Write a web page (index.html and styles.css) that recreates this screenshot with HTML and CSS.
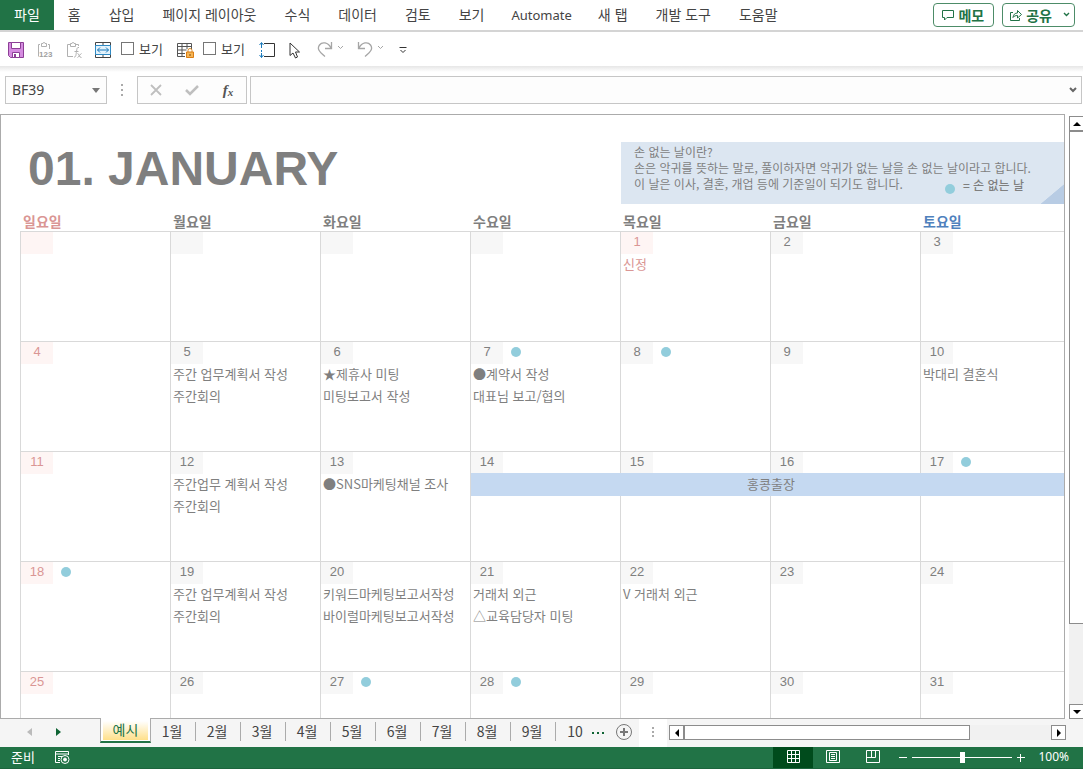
FILE: index.html
```html
<!DOCTYPE html>
<html lang="ko">
<head>
<meta charset="utf-8">
<title>01. JANUARY</title>
<link rel="stylesheet" href="styles.css">
</head>
<body>
<header class="menubar">
  <nav class="menu" aria-label="리본 메뉴">
    <button class="menu-item menu-file">파일</button>
    <button class="menu-item">홈</button>
    <button class="menu-item">삽입</button>
    <button class="menu-item">페이지 레이아웃</button>
    <button class="menu-item">수식</button>
    <button class="menu-item">데이터</button>
    <button class="menu-item">검토</button>
    <button class="menu-item">보기</button>
    <button class="menu-item menu-latin">Automate</button>
    <button class="menu-item">새 탭</button>
    <button class="menu-item">개발 도구</button>
    <button class="menu-item">도움말</button>
  </nav>
  <div class="menu-actions">
    <button class="outline-button">
      <svg width="12" height="12" viewBox="0 0 12 12" fill="none" stroke="currentColor"><path d="M.5 1.500h11v7H5l-2.500 2.500V8.500h-2z"/></svg>
      <span>메모</span>
    </button>
    <button class="outline-button outline-share">
      <svg width="12" height="12" viewBox="0 0 12 12" fill="none" stroke="currentColor"><path d="M3 3.500H.5v8h9V9M3 8.500c.3-3 2-4.500 4.500-4.500V1.500l4 4-4 3.500V6.500C5.500 6.500 4 7 3 8.500z"/></svg>
      <span>공유</span>
      <svg class="share-caret" width="7" height="5" viewBox="0 0 7 5" fill="none" stroke="currentColor" stroke-width="1.400"><path d="M1 1l2.500 2.500L6 1"/></svg>
    </button>
  </div>
</header>

<div class="quickbar">
  <button class="tool" aria-label="저장">
    <svg width="16" height="16" viewBox="0 0 16 16"><path d="M.5.5h15v15h-13l-2-2z" fill="#d58ce0" stroke="#8c3f96"/><path d="M3.500.5h9v6h-9z" fill="#fff" stroke="#8c3f96"/><path d="M4.500 15.500v-5h7v5z" fill="#fff" stroke="#8c3f96"/><path d="M6 12h2v3H6z" fill="#8c3f96"/></svg>
  </button>
  <button class="tool" aria-label="값 붙여넣기">
    <svg width="16" height="16" viewBox="0 0 16 16" fill="none" stroke="#b0b0b0"><path d="M3 2.500H1.500v12M11 2.500h1.500V7M4.500 1.500h1.500c0-1.500 2-1.500 2 0h1.500v3h-5z"/><text class="glyph-123" x="2" y="15">123</text></svg>
  </button>
  <button class="tool" aria-label="수식 붙여넣기">
    <svg width="16" height="16" viewBox="0 0 16 16" fill="none" stroke="#b0b0b0"><path d="M4 2.500H1.500v12H7M10 2.500h2.500V4M4.500 1.500h1.500c0-1.500 2-1.500 2 0h1.500v3h-5z"/><path d="M13 5.500c-2-.5-2 1-2.500 4s-.5 6-2.500 5.500M8.500 9.500h4M11.500 11.500c2 0 1 4 4 4M15.500 11.500c-1 0-3 4-4 4"/></svg>
  </button>
  <button class="tool" aria-label="병합하고 가운데 맞춤">
    <svg width="16" height="16" viewBox="0 0 16 16" fill="none" stroke="#444"><path d="M.5.5h15v15H.5z" fill="#fff"/><path d="M8 .5v3M8 12.500v3"/><path d="M.5 3.500h15v9H.5z" fill="#e4f3fc" stroke="#2f8ac4"/><path d="M2.500 8h11M5 5.500L2.500 8 5 10.500M11 5.500L13.500 8 11 10.500" stroke="#1979ba"/></svg>
  </button>
  <label class="check"><input type="checkbox">보기</label>
  <button class="tool tool-lock" aria-label="시트 보호">
    <svg width="17" height="16" viewBox="0 0 17 16" fill="none" stroke="#555"><path d="M8 14.500H.5v-13h14V7M.5 4.500h14M.5 8h9M.5 11.500H8M5 1.500v13M10 1.500V7"/><path d="M11 10V8.500a2 2 0 0 1 4 0V10" stroke="#db8a22"/><path d="M9.500 10h7v5.500h-7z" fill="#f5b555" stroke="#db7d13"/><path d="M13 12v2" stroke="#7e4c10"/></svg>
  </button>
  <label class="check"><input type="checkbox">보기</label>
  <button class="tool tool-height" aria-label="행 높이">
    <svg width="16" height="16" viewBox="0 0 16 16" fill="none" stroke="#333"><path d="M5 1.500h10.500v13H5"/><path d="M2.500 1v5M2.500 8v2M2.500 11v4.500M.5 3l2-2.500 2 2.500M.5 13l2 2.500 2-2.500" stroke="#1979ba"/></svg>
  </button>
  <button class="tool tool-pointer" aria-label="개체 선택">
    <svg width="12" height="17" viewBox="0 0 12 17" fill="#fff" stroke="#333"><path d="M1 1v12.500l3-2.500 2.500 5 2-1-2-5h4z"/></svg>
  </button>
  <button class="tool tool-arrow" aria-label="다시 실행">
    <svg width="28" height="16" viewBox="0 0 28 16" fill="none" stroke="#a6a6a6"><path d="M14.500 0v6.500H8M14 6C11 0 5-.5 2.500 3S1.500 9 8 14.500" stroke-width="1.300"/><path d="M21 4l2.500 2.500L26 4"/></svg>
  </button>
  <button class="tool tool-arrow" aria-label="실행 취소">
    <svg width="28" height="16" viewBox="0 0 28 16" fill="none" stroke="#a6a6a6"><path d="M1.500 0v6.500H8M2 6c3-6 9-6.500 11.500-3S14.500 9 8 14.500" stroke-width="1.300"/><path d="M21 4l2.500 2.500L26 4"/></svg>
  </button>
  <button class="tool" aria-label="빠른 실행 도구 모음 사용자 지정">
    <svg width="8" height="9" viewBox="0 0 8 9" fill="none" stroke="#333"><path d="M.5 1.500h7M1.500 4L4 6.500 6.500 4"/></svg>
  </button>
</div>

<div class="formulabar">
  <div class="namebox">
    <input class="namebox-input" aria-label="이름 상자" value="BF39">
    <button class="namebox-button" aria-label="이름 목록"><svg width="8" height="5" viewBox="0 0 8 5" fill="#777"><path d="M0 0h8L4 5z"/></svg></button>
  </div>
  <svg class="grip" width="2" height="12" viewBox="0 0 2 12" fill="#aaa"><path d="M0 0h2v2H0zM0 5h2v2H0zM0 10h2v2H0z"/></svg>
  <div class="formula-tools">
    <button class="plain" aria-label="취소"><svg width="12" height="12" viewBox="0 0 12 12" fill="none" stroke="#bfbfbf" stroke-width="1.800"><path d="M1 1l10 10M11 1L1 11"/></svg></button>
    <button class="plain" aria-label="입력"><svg width="14" height="12" viewBox="0 0 14 12" fill="none" stroke="#bfbfbf" stroke-width="2.500"><path d="M1 6l4 4 8-8"/></svg></button>
    <button class="plain fx" aria-label="함수 삽입">f<small>x</small></button>
  </div>
  <div class="formula-field">
    <input class="formula-input" aria-label="수식 입력줄">
    <button class="plain formula-expand" aria-label="확장"><svg width="8" height="6" viewBox="0 0 8 6" fill="none" stroke="#666" stroke-width="2"><path d="M1 1l3 3 3-3"/></svg></button>
  </div>
</div>

<main class="workspace">
  <section class="sheet">
    <div class="sheet-head">
      <h1 class="month">01. JANUARY</h1>
      <div class="note">
        <p>손 없는 날이란?</p>
        <p>손은 악귀를 뜻하는 말로, 풀이하자면 악귀가 없는 날을 손 없는 날이라고 합니다.</p>
        <p class="note-last">이 날은 이사, 결혼, 개업 등에 기준일이 되기도 합니다. <span class="legend"><i class="dot"></i>= 손 없는 날</span></p>
      </div>
    </div>
    <table class="calendar">
      <thead>
        <tr><th class="sun">일요일</th><th>월요일</th><th>화요일</th><th>수요일</th><th>목요일</th><th>금요일</th><th class="sat">토요일</th></tr>
      </thead>
      <tbody>
        <tr>
          <td class="holiday"><div class="day"><b></b></div></td>
          <td><div class="day"><b></b></div></td>
          <td><div class="day"><b></b></div></td>
          <td><div class="day"><b></b></div></td>
          <td class="holiday"><div class="day"><b>1</b></div><p>신정</p></td>
          <td><div class="day"><b>2</b></div></td>
          <td><div class="day"><b>3</b></div></td>
        </tr>
        <tr>
          <td class="holiday"><div class="day"><b>4</b></div></td>
          <td><div class="day"><b>5</b></div><p>주간 업무계획서 작성</p><p>주간회의</p></td>
          <td><div class="day"><b>6</b></div><p>★제휴사 미팅</p><p>미팅보고서 작성</p></td>
          <td><div class="day"><b>7</b><i class="dot"></i></div><p>●계약서 작성</p><p>대표님 보고/협의</p></td>
          <td><div class="day"><b>8</b><i class="dot"></i></div></td>
          <td><div class="day"><b>9</b></div></td>
          <td><div class="day"><b>10</b></div><p>박대리 결혼식</p></td>
        </tr>
        <tr>
          <td class="holiday"><div class="day"><b>11</b></div></td>
          <td><div class="day"><b>12</b></div><p>주간업무 계획서 작성</p><p>주간회의</p></td>
          <td><div class="day"><b>13</b></div><p>●SNS마케팅채널 조사</p></td>
          <td><div class="day"><b>14</b></div><div class="span-event">홍콩출장</div></td>
          <td><div class="day"><b>15</b></div></td>
          <td><div class="day"><b>16</b></div></td>
          <td><div class="day"><b>17</b><i class="dot"></i></div></td>
        </tr>
        <tr>
          <td class="holiday"><div class="day"><b>18</b><i class="dot"></i></div></td>
          <td><div class="day"><b>19</b></div><p>주간 업무계획서 작성</p><p>주간회의</p></td>
          <td><div class="day"><b>20</b></div><p>키워드마케팅보고서작성</p><p>바이럴마케팅보고서작성</p></td>
          <td><div class="day"><b>21</b></div><p>거래처 외근</p><p>△교육담당자 미팅</p></td>
          <td><div class="day"><b>22</b></div><p>V 거래처 외근</p></td>
          <td><div class="day"><b>23</b></div></td>
          <td><div class="day"><b>24</b></div></td>
        </tr>
        <tr>
          <td class="holiday"><div class="day"><b>25</b></div></td>
          <td><div class="day"><b>26</b></div></td>
          <td><div class="day"><b>27</b><i class="dot"></i></div></td>
          <td><div class="day"><b>28</b><i class="dot"></i></div></td>
          <td><div class="day"><b>29</b></div></td>
          <td><div class="day"><b>30</b></div></td>
          <td><div class="day"><b>31</b></div></td>
        </tr>
      </tbody>
    </table>
  </section>
  <div class="vscroll">
    <button class="scroll-button" aria-label="위로"><svg width="8" height="4" viewBox="0 0 8 4"><path d="M4 0l4 4H0z"/></svg></button>
    <div class="vtrack"><div class="vthumb"></div></div>
    <button class="scroll-button" aria-label="아래로"><svg width="8" height="4" viewBox="0 0 8 4"><path d="M4 4l4-4H0z"/></svg></button>
  </div>
</main>

<div class="tabbar">
  <div class="tab-nav">
    <button class="plain" aria-label="이전 시트"><svg width="5" height="8" viewBox="0 0 5 8" fill="#bbb"><path d="M5 0v8L0 4z"/></svg></button>
    <button class="plain" aria-label="다음 시트"><svg width="5" height="8" viewBox="0 0 5 8" fill="#0f6434"><path d="M0 0v8l5-4z"/></svg></button>
  </div>
  <nav class="tabs" aria-label="시트">
    <button class="tab tab-active"><span>예시</span></button>
    <button class="tab">1월</button>
    <button class="tab">2월</button>
    <button class="tab">3월</button>
    <button class="tab">4월</button>
    <button class="tab">5월</button>
    <button class="tab">6월</button>
    <button class="tab">7월</button>
    <button class="tab">8월</button>
    <button class="tab">9월</button>
    <button class="tab tab-cut">10</button>
  </nav>
  <button class="plain tab-more" aria-label="시트 더 보기"><svg width="12" height="3" viewBox="0 0 12 3" fill="#0f6434"><path d="M0 0h2v2H0zM5 0h2v2H5zM10 0h2v2h-2z"/></svg></button>
  <button class="plain tab-add" aria-label="새 시트"><svg width="16" height="16" viewBox="0 0 16 16" fill="none" stroke="#777"><circle cx="8" cy="8" r="7.500"/><path d="M4 8h8M8 4v8" stroke-width="2"/></svg></button>
  <div class="tab-grip"><svg width="2" height="10" viewBox="0 0 2 10" fill="#aaa"><path d="M0 0h2v2H0zM0 4h2v2H0zM0 8h2v2H0z"/></svg></div>
  <div class="hscroll">
    <button class="scroll-button" aria-label="왼쪽"><svg width="4" height="8" viewBox="0 0 4 8"><path d="M4 0v8L0 4z"/></svg></button>
    <div class="htrack"><div class="hthumb"></div></div>
    <button class="scroll-button" aria-label="오른쪽"><svg width="4" height="8" viewBox="0 0 4 8"><path d="M0 0v8l4-4z"/></svg></button>
  </div>
</div>

<footer class="statusbar">
  <span class="status-text">준비</span>
  <button class="plain macro" aria-label="매크로 기록"><svg width="15" height="13" viewBox="0 0 15 13" fill="none" stroke="#fff"><path d="M5 11.500H.5V.5h13V4M.5 3h13M3 5.500h4M3 7.500h2M3 9.500h2"/><circle cx="10" cy="8.500" r="4"/><circle cx="10" cy="8.500" r="1.500" fill="#fff"/></svg></button>
  <div class="views">
    <button class="view view-active" aria-label="기본"><svg width="13" height="13" viewBox="0 0 13 13" fill="none" stroke="#fff"><path d="M.5.5h12v12H.5zM.5 4.500h12M.5 8.500h12M4.500.5v12M8.500.5v12"/></svg></button>
    <button class="view" aria-label="페이지 레이아웃"><svg width="14" height="13" viewBox="0 0 14 13" fill="none" stroke="#fff"><path d="M.5.5h13v12H.5zM3.500 2.500h7v8h-7zM5 4.500h4M5 6.500h4M5 8.500h4"/></svg></button>
    <button class="view" aria-label="페이지 나누기 미리 보기"><svg width="14" height="13" viewBox="0 0 14 13" fill="none" stroke="#fff"><path d="M.5.5h13v12H.5zM.5 7.500h9v-7M5.500.5v7"/></svg></button>
  </div>
  <div class="zoom">
    <button class="plain" aria-label="축소"><svg width="8" height="8" viewBox="0 0 8 8" stroke="#fff"><path d="M0 3.500h8"/></svg></button>
    <input class="zoom-range" type="range" min="0" max="100" value="50" aria-label="확대/축소">
    <button class="plain" aria-label="확대"><svg width="8" height="8" viewBox="0 0 8 8" stroke="#fff"><path d="M0 3.500h8M3.500 0v8"/></svg></button>
  </div>
  <span class="zoom-value">100%</span>
</footer>
</body>
</html>
```
FILE: styles.css
```css
* {
  box-sizing: border-box;
}

body {
  display: flex;
  flex-direction: column;
  height: 100vh;
  margin: 0;
  overflow: hidden;
  background: #fff;
  color: #444;
  font: 13px/16px "Noto Sans CJK KR", sans-serif;
}

h1,
p {
  margin: 0;
}

button,
input {
  margin: 0;
  padding: 0;
  border: 0;
  border-radius: 0;
  background: none;
  color: inherit;
  font: inherit;
}

svg {
  display: block;
  flex: none;
}

.plain,
.tool {
  display: flex;
  align-items: center;
  justify-content: center;
}

/* Ribbon menu */
.menubar {
  display: flex;
  flex: none;
  justify-content: space-between;
  height: 32px;
  border-bottom: 2px solid #d4d4d4;
}

.menu {
  display: flex;
}

.menu-item {
  padding: 0 14px 2px;
  font-size: 14px;
  white-space: nowrap;
}

.menu-file {
  background: #217346;
  color: #fff;
}

.menu-latin {
  padding: 0 12px 0 13px;
  font-family: "Noto Sans", sans-serif;
  font-size: 13px;
}

.menu-actions {
  display: flex;
  gap: 8px;
  padding: 3px 8px 3px 0;
}

.outline-button {
  display: flex;
  align-items: center;
  gap: 4px;
  padding: 0 9px 1px 8px;
  border: 1px solid #4d8c68;
  border-radius: 4px;
  color: #217346;
  font-size: 14px;
  font-weight: 700;
}

.outline-share {
  padding: 0 4px 1px 7px;
}

.share-caret {
  margin-left: 7px;
}

/* Quick access toolbar */
.quickbar {
  display: flex;
  flex: none;
  align-items: center;
  gap: 13px;
  height: 34px;
  padding: 2px 8px 0;
}

.check {
  display: flex;
  align-items: center;
  gap: 5px;
  margin: -3px -3px 0;
}

.check input {
  width: 13px;
  height: 13px;
  border: 1px solid #767676;
  background: #fff;
  appearance: none;
}

.tool-lock {
  margin-left: 4px;
  margin-right: -1px;
}

.tool-height {
  margin-left: 4px;
}

.tool-pointer {
  margin-left: 1px;
}

.tool-arrow {
  margin-left: 3px;
  margin-right: -4px;
}

.tool:last-child {
  margin-left: 5px;
}

/* Formula bar */
.formulabar {
  display: flex;
  flex: none;
  height: 48px;
  padding: 10px 1px 10px 5px;
  background: linear-gradient(#e6e6e6, #fff 6px);
}

.namebox {
  display: flex;
  width: 102px;
  border: 1px solid #c6c6c6;
  background: #fdfdfd;
}

.namebox-input {
  flex: 1;
  min-width: 0;
  padding-left: 6px;
  font-family: "Noto Sans", sans-serif;
  font-size: 14px;
}

.namebox-button {
  padding: 0 6px;
}

.grip {
  align-self: center;
  margin: 0 14px;
}

.formula-tools {
  display: flex;
  width: 110px;
  border: 1px solid #c6c6c6;
  background: #fdfdfd;
}

.formula-tools .plain {
  flex: 1;
}

.formula-tools .fx {
  color: #555;
  font: italic 700 15px/16px "Liberation Serif", serif;
}

.fx small {
  padding-top: 3px;
  font-size: 11px;
}

.formula-field {
  display: flex;
  flex: 1;
  margin-left: 3px;
  border: 1px solid #c6c6c6;
  background: #fdfdfd;
}

.formula-input {
  flex: 1;
}

.formula-expand {
  width: 16px;
}

/* Sheet */
.workspace {
  display: flex;
  flex: 1;
  min-height: 0;
}

.sheet {
  flex: 1;
  min-width: 0;
  padding-left: 19px;
  border: 1px solid #ababab;
  overflow: hidden;
  color: #7f7f7f;
}

.sheet-head {
  display: flex;
  height: 97px;
  padding: 27px 0 8px 1px;
}

.month {
  flex: 0 0 600px;
  padding-left: 7px;
  font: 700 48px/54px "Liberation Sans", sans-serif;
}

.note {
  flex: 1;
  padding: 2px 13px 0;
  background: linear-gradient(140deg, transparent 50%, #b8cce4 52%) right bottom / 24px 20px no-repeat #dce6f1;
  font-size: 12px;
  white-space: nowrap;
}

.note-last {
  display: flex;
  justify-content: space-between;
  padding-right: 27px;
}

.legend {
  display: flex;
  align-items: center;
  gap: 8px;
  font-weight: 500;
}

.dot {
  width: 10px;
  height: 10px;
  border-radius: 50%;
  background: #92cddc;
}

.legend .dot {
  margin-top: 8px;
}

.calendar {
  width: 1050px;
  border-spacing: 0;
  table-layout: fixed;
}

.calendar th {
  height: 19px;
  padding: 0 3px;
  font-size: 14px;
  line-height: 19px;
  text-align: left;
}

.calendar .sun {
  color: #da9694;
}

.calendar .sat {
  color: #4f81bd;
}

.calendar td {
  position: relative;
  height: 110px;
  padding: 0;
  border: solid #d9d9d9;
  border-width: 1px 0 0 1px;
  vertical-align: top;
}

.day {
  display: flex;
  align-items: center;
  gap: 8px;
  height: 21px;
}

.day b {
  align-self: flex-start;
  width: 32px;
  height: 22px;
  background: #f7f7f7;
  font: 13px/20px "Liberation Sans", sans-serif;
  text-align: center;
}

.day .dot {
  margin-bottom: 1px;
}

.calendar p {
  padding-left: 2px;
  line-height: 22px;
  white-space: nowrap;
}

.holiday {
  color: #da9694;
}

.holiday b {
  background: #fef5f4;
}

.span-event {
  position: absolute;
  z-index: 1;
  top: 21px;
  left: 0;
  width: calc(400% + 4px);
  padding-bottom: 1px;
  background: #c5d9f1;
  line-height: 22px;
  text-align: center;
}

/* Scroll bars */
.vscroll {
  display: flex;
  flex: none;
  flex-direction: column;
  width: 14px;
  margin: 2px 0 0 4px;
}

.scroll-button {
  display: flex;
  flex: none;
  align-items: center;
  justify-content: center;
  width: 15px;
  height: 15px;
  border: 1px solid #8c8c8c;
  background: #fff;
}

.vtrack {
  flex: 1;
  background: #f1f1f1;
}

.vthumb {
  width: 15px;
  height: 86%;
  border: 1px solid #8c8c8c;
  background: #fff;
}

.hscroll {
  display: flex;
  flex: 1;
  padding: 6px 17px 7px 2px;
}

.htrack {
  flex: 1;
  background: #f1f1f1;
}

.hthumb {
  width: 78%;
  height: 15px;
  border: 1px solid #8c8c8c;
  background: #fff;
}

/* Sheet tabs */
.tabbar {
  display: flex;
  flex: none;
  height: 28px;
  background: #f5f5f5;
}

.tab-nav {
  display: flex;
  align-items: center;
  gap: 24px;
  width: 100px;
  padding: 0 0 3px 27px;
}

.tabs {
  display: flex;
  align-items: flex-start;
}

.tab {
  width: 45px;
  height: 19px;
  margin-top: 3px;
  padding: 0 2px 2px 0;
  border-right: 1px solid #ababab;
  font-size: 14px;
  line-height: 16px;
}

.tab-active {
  width: 51px;
  height: 25px;
  margin-top: -1px;
  padding: 3px 2px 1px;
  border: solid #ababab;
  border-width: 0 1px;
  border-bottom: 2px solid #217346;
  background: #fff;
  color: #217346;
}

.tab-active span {
  display: block;
  height: 19px;
  background: linear-gradient(#fff, #ffe08a);
  line-height: 16px;
}

.tab-cut {
  width: 32px;
  padding-left: 8px;
  border: 0;
}

.tab-more {
  width: 20px;
}

.tab-add {
  width: 31px;
  padding-bottom: 2px;
}

.tab-grip {
  display: flex;
  align-items: center;
  justify-content: center;
  width: 28px;
  padding-bottom: 2px;
  background: #fff;
}

/* Status bar */
.statusbar {
  display: flex;
  flex: none;
  align-items: center;
  height: 22px;
  padding: 0 14px 0 11px;
  border-bottom: 1px solid #1c653d;
  background: #217346;
  color: #fff;
}

.status-text {
  padding-bottom: 2px;
}

.macro {
  margin-left: 20px;
}

.views {
  display: flex;
  align-self: stretch;
  margin-left: auto;
}

.view {
  display: flex;
  align-items: center;
  justify-content: center;
  width: 40px;
  padding-bottom: 2px;
}

.view-active {
  background: #004b1c;
}

.zoom {
  display: flex;
  align-items: center;
  gap: 5px;
  margin: 0 13px 0 6px;
}

.zoom-range {
  width: 100px;
  height: 12px;
  background: linear-gradient(#fff, #fff) center / 100% 1px no-repeat;
  appearance: none;
}

.zoom-range::-webkit-slider-thumb {
  width: 5px;
  height: 11px;
  background: #fff;
  appearance: none;
}

.zoom-value {
  padding-bottom: 1px;
  font-family: "Noto Sans", sans-serif;
  font-size: 12px;
}

.glyph-123 {
  fill: #a0a0a0;
  stroke: none;
  font: 700 8px "Liberation Sans", sans-serif;
}
```
